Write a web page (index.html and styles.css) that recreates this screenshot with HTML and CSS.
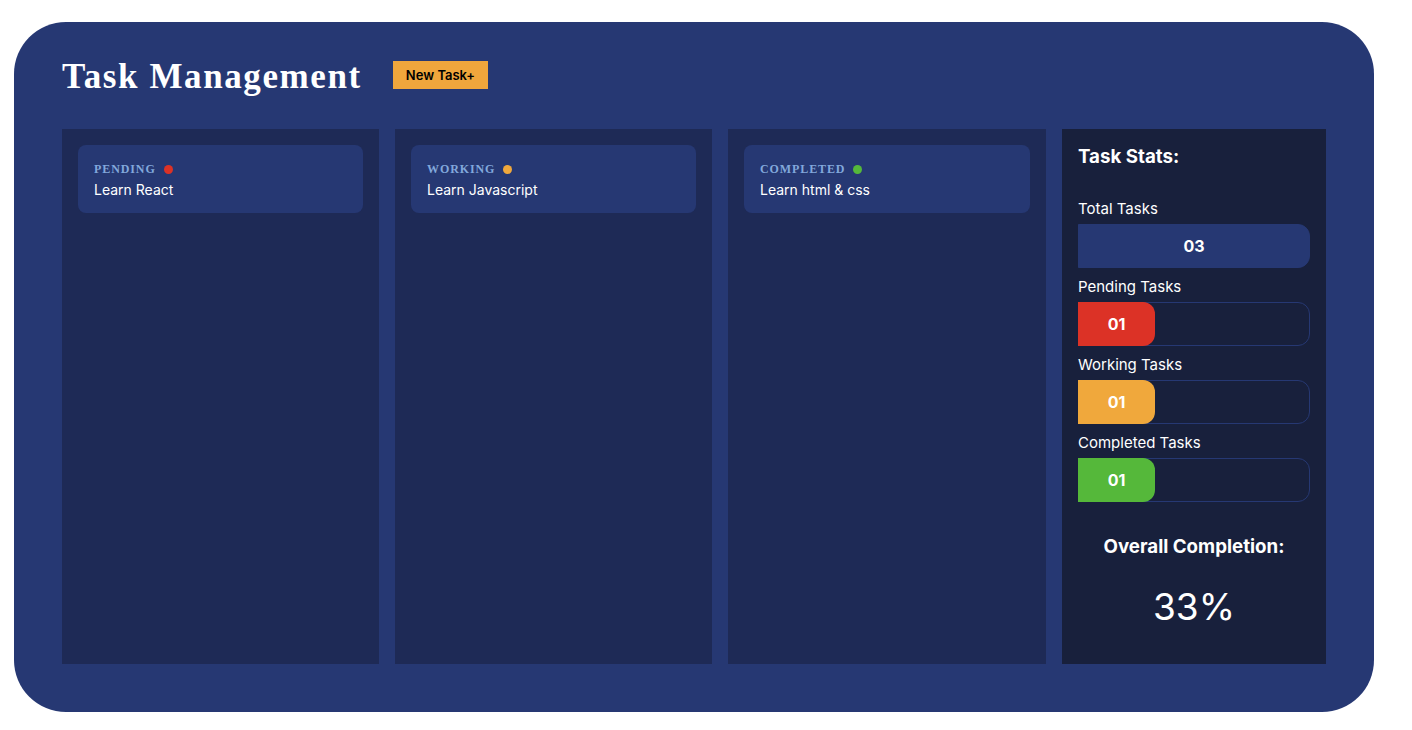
FILE: index.html
```html
<!DOCTYPE html>
<html lang="en">
<head>
<meta charset="utf-8">
<title>Task Management</title>
<link rel="stylesheet" href="styles.css">
</head>
<body>
<div class="app">
  <header class="header">
    <h1 class="title">Task Management</h1>
    <button class="new-btn">New Task+</button>
  </header>
  <main class="board">
    <section class="column">
      <div class="card">
        <div class="status">PENDING <span class="dot dot-red"></span></div>
        <div class="task">Learn React</div>
      </div>
    </section>
    <section class="column">
      <div class="card">
        <div class="status">WORKING <span class="dot dot-orange"></span></div>
        <div class="task">Learn Javascript</div>
      </div>
    </section>
    <section class="column">
      <div class="card">
        <div class="status">COMPLETED <span class="dot dot-green"></span></div>
        <div class="task">Learn html &amp; css</div>
      </div>
    </section>
    <aside class="stats">
      <h3 class="stats-title">Task Stats:</h3>
      <div class="stat-label">Total Tasks</div>
      <div class="bar bar-total">03</div>
      <div class="stat-label">Pending Tasks</div>
      <div class="bar"><div class="fill fill-red">01</div></div>
      <div class="stat-label">Working Tasks</div>
      <div class="bar"><div class="fill fill-orange">01</div></div>
      <div class="stat-label">Completed Tasks</div>
      <div class="bar"><div class="fill fill-green">01</div></div>
      <h3 class="overall-title">Overall Completion:</h3>
      <div class="overall-value">33%</div>
    </aside>
  </main>
</div>
</body>
</html>
```

FILE: styles.css
```css
* { box-sizing: border-box; }

body {
  margin: 0;
  padding: 22px 38px 18px 14px;
  background: #ffffff;
  font-family: Inter, "Noto Sans", sans-serif;
  color: #ffffff;
}

.app {
  width: 1360px;
  height: 690px;
  background: #263873;
  border-radius: 52px;
  padding: 28px 48px 49px 48px;
}

.header {
  display: flex;
  align-items: center;
  gap: 31px;
  height: 50px;
  margin-bottom: 29px;
}

.title {
  margin: 0;
  padding-top: 3px;
  font-family: "Liberation Serif", "Times New Roman", serif;
  font-weight: 700;
  font-size: 35px;
  letter-spacing: 1.6px;
  line-height: 50px;
  color: #ffffff;
}

.new-btn {
  height: 28px;
  padding: 0 13px;
  border: none;
  border-radius: 0;
  background: #f0a63c;
  color: #000000;
  font-family: Inter, sans-serif;
  font-weight: 600;
  font-size: 13px;
  cursor: pointer;
}

.board {
  display: grid;
  grid-template-columns: 317px 317px 318px 264px;
  gap: 16px;
  height: 535px;
}

.column {
  background: #1e2a56;
  padding: 16px;
}

.card {
  background: #263873;
  border-radius: 8px;
  padding: 16px 16px 13px 16px;
}

.status {
  display: flex;
  align-items: center;
  margin-bottom: 3px;
  font-family: "Liberation Serif", "Times New Roman", serif;
  font-weight: 700;
  font-size: 12px;
  letter-spacing: 0.9px;
  line-height: 16px;
  color: #82a8dc;
}

.dot {
  display: inline-block;
  width: 9px;
  height: 9px;
  border-radius: 50%;
  margin-left: 8px;
}
.dot-red { background: #dc3226; }
.dot-orange { background: #f0a83c; }
.dot-green { background: #55b83a; }

.task {
  font-size: 14px;
  line-height: 20px;
  color: #ffffff;
}

.stats {
  background: #18203c;
  padding: 16px;
}

.stats-title {
  margin: 0 0 30px 0;
  font-size: 18.72px;
  line-height: 23px;
  font-weight: 700;
}

.stat-label {
  font-size: 15px;
  line-height: 20px;
  padding-top: 1px;
  margin-bottom: 5px;
}

.bar {
  height: 44px;
  margin-bottom: 8px;
  border: 1px solid #263873;
  border-radius: 0 12px 12px 0;
  display: flex;
  align-items: stretch;
}

.bar-total {
  background: #263873;
  justify-content: center;
  align-items: center;
  font-weight: 700;
  font-size: 16px;
}

.fill {
  width: 77px;
  margin: -1px 0 -1px -1px;
  border-radius: 0 12px 12px 0;
  display: flex;
  align-items: center;
  justify-content: center;
  font-weight: 700;
  font-size: 16px;
  color: #ffffff;
}
.fill-red { background: #dc3226; }
.fill-orange { background: #f0a83c; }
.fill-green { background: #55b83a; }

.overall-title {
  margin: 33px 0 0 0;
  text-align: center;
  font-size: 18.72px;
  line-height: 23px;
  font-weight: 700;
}

.overall-value {
  margin-top: 25px;
  text-align: center;
  font-size: 37px;
  line-height: 48px;
  font-weight: 400;
}
```
